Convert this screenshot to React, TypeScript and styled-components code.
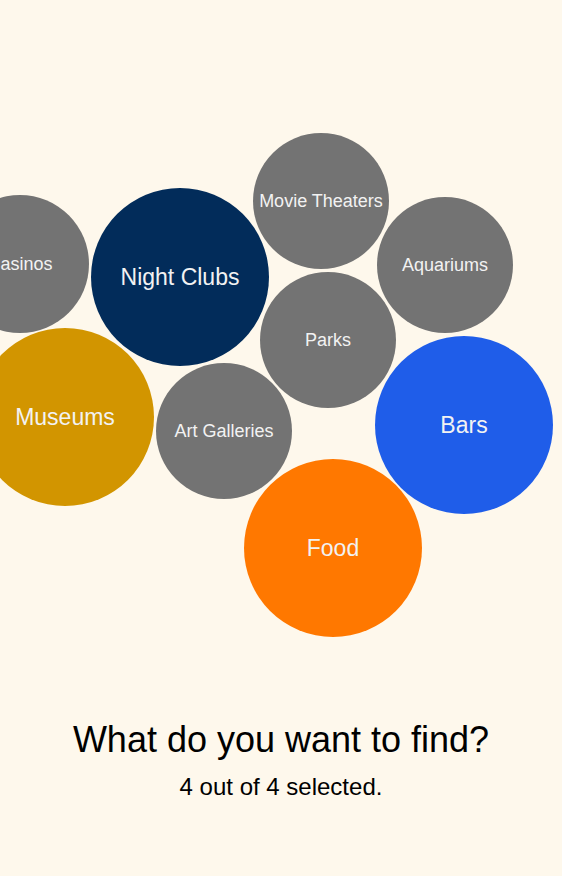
import styled, { createGlobalStyle } from "styled-components";

const bubbles = [
  { label: "Casinos", x: 20, y: 264, r: 69, color: "#737373", size: 18 },
  { label: "Night Clubs", x: 180, y: 277, r: 89, color: "#022c5a", size: 23 },
  { label: "Movie Theaters", x: 321, y: 201, r: 68, color: "#737373", size: 18 },
  { label: "Aquariums", x: 445, y: 265, r: 68, color: "#737373", size: 18 },
  { label: "Parks", x: 328, y: 340, r: 68, color: "#737373", size: 18 },
  { label: "Museums", x: 65, y: 417, r: 89, color: "#d29500", size: 23 },
  { label: "Art Galleries", x: 224, y: 431, r: 68, color: "#737373", size: 18 },
  { label: "Bars", x: 464, y: 425, r: 89, color: "#1f5de9", size: 23 },
  { label: "Food", x: 333, y: 548, r: 89, color: "#ff7800", size: 23 },
];

const GlobalStyle = createGlobalStyle`
  html, body {
    margin: 0;
    padding: 0;
    background: #fef8ec;
    font-family: "Liberation Sans", Arial, sans-serif;
  }
`;

const Screen = styled.div`
  width: 562px;
  height: 876px;
  overflow: hidden;
  display: flex;
  flex-direction: column;
  background: #fef8ec;
`;

const Canvas = styled.div`
  position: relative;
  height: 719px;
  flex-shrink: 0;
`;

const Bubble = styled.div<{ $color: string; $size: number }>`
  position: absolute;
  border-radius: 50%;
  background: ${(p) => p.$color};
  color: #f2f2f2;
  font-size: ${(p) => p.$size}px;
  display: flex;
  align-items: center;
  justify-content: center;
  white-space: nowrap;
`;

const Footer = styled.div`
  display: flex;
  flex-direction: column;
  align-items: center;
  gap: 13px;
`;

const Title = styled.h1`
  margin: 0;
  font-size: 36px;
  line-height: 41px;
  font-weight: 400;
  color: #000;
`;

const Subtitle = styled.div`
  font-size: 24px;
  line-height: 28px;
  color: #000;
`;

export default function App() {
  return (
    <Screen>
      <GlobalStyle />
      <Canvas>
        {bubbles.map((b) => (
          <Bubble
            key={b.label}
            $color={b.color}
            $size={b.size}
            style={{
              left: b.x - b.r,
              top: b.y - b.r,
              width: b.r * 2,
              height: b.r * 2,
            }}
          >
            {b.label}
          </Bubble>
        ))}
      </Canvas>
      <Footer>
        <Title>What do you want to find?</Title>
        <Subtitle>4 out of 4 selected.</Subtitle>
      </Footer>
    </Screen>
  );
}
